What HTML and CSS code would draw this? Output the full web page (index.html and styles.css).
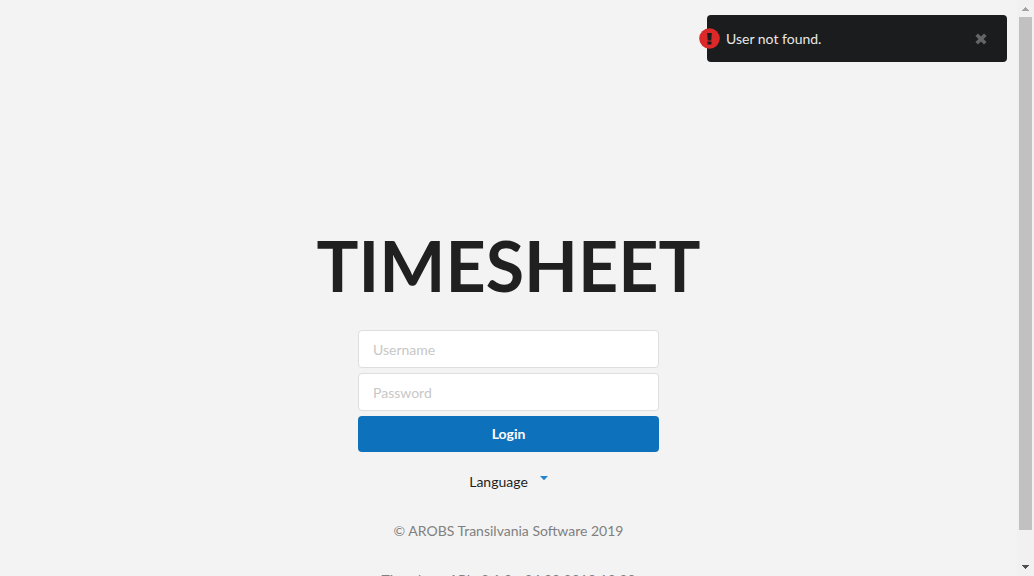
FILE: index.html
```html
<!DOCTYPE html>
<html lang="en">
<head>
<meta charset="utf-8">
<meta name="viewport" content="width=device-width, initial-scale=1">
<title>Timesheet</title>
<link rel="stylesheet" href="styles.css">
</head>
<body>
<div class="viewport">
  <main class="page">
    <h1 class="title">TIMESHEET</h1>
    <form class="login">
      <input class="field" type="text" placeholder="Username" aria-label="Username">
      <input class="field" type="password" placeholder="Password" aria-label="Password">
      <button class="submit" type="submit">Login</button>
    </form>
    <button class="language" type="button" aria-haspopup="listbox">
      <span>Language</span>
      <svg class="caret" width="8" height="4" viewBox="0 0 8 4" aria-hidden="true"><path d="M0 0h8L4.500 3.700q-.5.500-1 0z"/></svg>
    </button>
    <p class="note">© AROBS Transilvania Software 2019</p>
    <p class="note">Timesheet API : 2.1.0 - 24.09.2019 10:29</p>
    <div class="toast" role="alert">
      <svg class="toast-icon" width="22" height="22" viewBox="0 0 22 22" aria-hidden="true">
        <circle cx="11.500" cy="10.500" r="10.300" fill="#db2828"/>
        <path d="M9.200 5h4.600l-.5 7.500H9.700zM9.500 13.500h4v3h-4z" fill="#1b1c1d"/>
      </svg>
      <span class="toast-text">User not found.</span>
      <button class="toast-close" type="button" aria-label="Close">
        <svg width="12" height="12" viewBox="0 0 12 12" aria-hidden="true"><path d="M1.700 1.700l8.600 8.600M10.300 1.700L1.700 10.300" stroke="#656566" stroke-width="3.600"/></svg>
      </button>
    </div>
  </main>
  <div class="scrollbar" aria-hidden="true">
    <svg class="arrow" width="7" height="4" viewBox="0 0 7 4"><path d="M3 0h1v1h1v1h1v1h1v1H0V3h1V2h1V1h1z" fill="#a3a3a3"/></svg>
    <div class="track"><div class="thumb"></div></div>
    <svg class="arrow" width="7" height="4" viewBox="0 0 7 4"><path d="M0 0h7v1H6v1H5v1H4v1H3V3H2V2H1V1H0z" fill="#505050"/></svg>
  </div>
</div>
</body>
</html>
```
FILE: styles.css
```css
* {
  box-sizing: border-box;
}

body {
  margin: 0;
  background: #f3f3f3;
  color: #1e1e1e;
  font: 14px/20px Lato, "Liberation Sans", sans-serif;
}

button,
input {
  font: inherit;
}

.viewport {
  display: grid;
  grid-template-columns: 1fr 17px;
  height: 100vh;
  overflow: hidden;
}

.page {
  position: relative;
  display: flex;
  flex-direction: column;
  align-items: center;
  min-width: 0;
  padding: 220px 16px 0;
  overflow: hidden;
}

.title {
  margin: 0 0 20px;
  font-size: 70px;
  line-height: 90px;
  font-weight: 700;
  color: #202020;
}

.login {
  display: flex;
  flex-direction: column;
  gap: 5px;
  width: 100%;
  max-width: 301px;
}

.field {
  width: 100%;
  height: 38px;
  padding: 0 14px;
  border: 1px solid #dededf;
  border-radius: 4px;
  background: #fff;
  color: #1e1e1e;
}

.field::placeholder {
  color: #c7c7c7;
  opacity: 1;
}

.submit {
  height: 36px;
  padding: 0;
  border: 0;
  border-radius: 4px;
  background: #0d71bb;
  color: #fff;
  font-weight: 700;
}

.language {
  display: flex;
  gap: 12px;
  margin: 20px 0 29px;
  padding: 0;
  border: 0;
  background: none;
  color: #1e1e1e;
}

.caret {
  margin-top: 4px;
  fill: #2185d0;
}

.note {
  flex: none;
  margin: 0 0 29px;
  color: #808080;
}

.toast {
  position: absolute;
  top: 15px;
  right: 10px;
  display: flex;
  align-items: center;
  width: 300px;
  height: 47px;
  padding-right: 20px;
  border-radius: 4px;
  background: #1b1c1d;
  color: #e8e8e8;
}

.toast-icon {
  margin: 0 6px 0 -9px;
}

.toast-text {
  flex: 1;
  font-weight: 400;
}

.toast-close {
  display: flex;
  padding: 0;
  border: 0;
  background: none;
}

.scrollbar {
  display: flex;
  flex-direction: column;
  align-items: center;
  padding: 7px 2px;
  background: #f1f1f1;
}

.arrow {
  flex: none;
}

.track {
  flex: 1;
  width: 100%;
  padding: 6px 0 35px;
}

.thumb {
  height: 100%;
  background: #c1c1c1;
}
```
